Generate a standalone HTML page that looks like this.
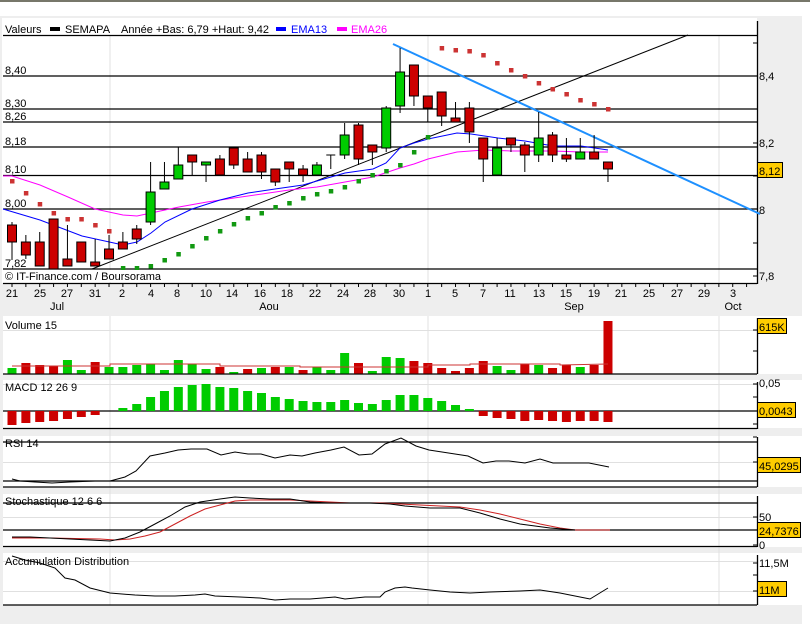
<!DOCTYPE html>
<html><head><meta charset="utf-8"><style>
html,body{margin:0;padding:0;background:#fff;width:810px;height:624px;overflow:hidden}
svg{display:block;font-family:"Liberation Sans",sans-serif;font-size:11px}
</style></head><body>
<svg id="s" width="810" height="624" viewBox="0 0 810 624" xmlns="http://www.w3.org/2000/svg">
<rect x="0" y="0" width="810" height="624" fill="#fff"/>
<rect x="0" y="0" width="810" height="2" fill="#77776a"/>
<rect x="0" y="16" width="802" height="608" fill="#eeeeee"/>
<rect x="2" y="18" width="755" height="265" fill="#fff"/>
<rect x="3" y="316" width="799" height="58" fill="#fff"/>
<rect x="3" y="380" width="799" height="48" fill="#fff"/>
<rect x="3" y="436" width="799" height="51" fill="#fff"/>
<rect x="3" y="494" width="799" height="53" fill="#fff"/>
<rect x="3" y="553" width="799" height="52" fill="#fff"/>
<g stroke="#e0e0e0" stroke-width="1">
<line x1="110" y1="36" x2="110" y2="283"/><line x1="428" y1="36" x2="428" y2="283"/><line x1="719" y1="36" x2="719" y2="283"/>
<line x1="110" y1="316" x2="110" y2="605"/><line x1="428" y1="316" x2="428" y2="605"/><line x1="719" y1="316" x2="719" y2="605"/>
<line x1="3" y1="330.5" x2="757" y2="330.5"/><line x1="3" y1="384.5" x2="757" y2="384.5"/><line x1="3" y1="462.5" x2="757" y2="462.5"/>
<line x1="3" y1="517.5" x2="757" y2="517.5"/><line x1="3" y1="561.5" x2="757" y2="561.5"/><line x1="3" y1="591.5" x2="757" y2="591.5"/>
</g>
<g stroke="#000" stroke-width="1.3">
<line x1="3" y1="35.5" x2="757" y2="35.5"/>
<line x1="3" y1="76" x2="757" y2="76"/><line x1="3" y1="109" x2="757" y2="109"/><line x1="3" y1="122" x2="757" y2="122"/>
<line x1="3" y1="147" x2="757" y2="147"/><line x1="3" y1="175.5" x2="757" y2="175.5"/><line x1="3" y1="209" x2="757" y2="209"/>
<line x1="3" y1="269" x2="757" y2="269"/>
<line x1="3" y1="283.5" x2="757" y2="283.5"/><line x1="757.5" y1="21" x2="757.5" y2="284"/>
<line x1="3" y1="374" x2="757" y2="374"/><line x1="757.5" y1="318" x2="757.5" y2="374"/>
<line x1="3" y1="411" x2="757" y2="411"/><line x1="3" y1="428.5" x2="757" y2="428.5"/><line x1="757.5" y1="382" x2="757.5" y2="429"/>
<line x1="3" y1="442" x2="757" y2="442"/><line x1="3" y1="481" x2="757" y2="481"/><line x1="3" y1="487" x2="757" y2="487"/><line x1="757.5" y1="437" x2="757.5" y2="487"/>
<line x1="3" y1="503" x2="757" y2="503"/><line x1="3" y1="530" x2="757" y2="530"/><line x1="3" y1="546.5" x2="757" y2="546.5"/><line x1="757.5" y1="496" x2="757.5" y2="547"/>
<line x1="3" y1="605" x2="757" y2="605"/><line x1="757.5" y1="555" x2="757.5" y2="605"/>
</g>
<g stroke="#000" stroke-width="1">
<line x1="753" y1="43" x2="757" y2="43"/><line x1="753" y1="76" x2="757" y2="76"/><line x1="753" y1="109" x2="757" y2="109"/><line x1="753" y1="143" x2="757" y2="143"/><line x1="753" y1="176" x2="757" y2="176"/><line x1="753" y1="209" x2="757" y2="209"/><line x1="753" y1="243" x2="757" y2="243"/><line x1="753" y1="276" x2="757" y2="276"/>
<line x1="753" y1="330" x2="757" y2="330"/><line x1="753" y1="351" x2="757" y2="351"/>
<line x1="753" y1="384" x2="757" y2="384"/><line x1="753" y1="397" x2="757" y2="397"/><line x1="753" y1="424" x2="757" y2="424"/>
<line x1="753" y1="437" x2="757" y2="437"/><line x1="753" y1="462" x2="757" y2="462"/>
<line x1="753" y1="517" x2="757" y2="517"/><line x1="753" y1="545" x2="757" y2="545"/>
<line x1="753" y1="563" x2="757" y2="563"/><line x1="753" y1="575" x2="757" y2="575"/><line x1="753" y1="591" x2="757" y2="591"/>
</g>
<g id="dyn"></g>
<rect x="4" y="270" width="136" height="12" fill="#fff"/>
<text x="5" y="280">© IT-Finance.com / Boursorama</text>
<text x="5" y="33">Valeurs</text>
<rect x="50" y="27" width="10" height="4" fill="#000"/>
<text x="65" y="33">SEMAPA</text>
<text x="121" y="33">Année +Bas: 6,79 +Haut: 9,42</text>
<rect x="276" y="27" width="10" height="4" fill="#0000ff"/>
<text x="291" y="33" fill="#0000ff">EMA13</text>
<rect x="337" y="27" width="10" height="4" fill="#ff00ff"/>
<text x="351" y="33" fill="#ff00ff">EMA26</text>
<text x="5" y="74">8,40</text><text x="5" y="107">8,30</text><text x="5" y="120">8,26</text>
<text x="5" y="145">8,18</text><text x="5" y="173">8,10</text><text x="5" y="207">8,00</text><text x="5" y="267">7,82</text>
<text x="759" y="80">8,4</text><text x="759" y="147">8,2</text><text x="759" y="214">8</text><text x="759" y="280">7,8</text>
<rect x="757.5" y="162.5" width="25" height="15" fill="#ffcc00" stroke="#000"/><text x="759" y="175">8,12</text>
<g text-anchor="middle">
<text x="12" y="297">21</text><text x="40" y="297">25</text><text x="67" y="297">27</text><text x="95" y="297">31</text><text x="122" y="297">2</text><text x="151" y="297">4</text><text x="177" y="297">8</text><text x="206" y="297">10</text><text x="232" y="297">14</text><text x="260" y="297">16</text><text x="287" y="297">18</text><text x="315" y="297">22</text><text x="343" y="297">24</text><text x="370" y="297">28</text><text x="399" y="297">30</text><text x="428" y="297">1</text><text x="455" y="297">5</text><text x="483" y="297">7</text><text x="510" y="297">11</text><text x="539" y="297">13</text><text x="566" y="297">15</text><text x="594" y="297">19</text><text x="621" y="297">21</text><text x="649" y="297">25</text><text x="677" y="297">27</text><text x="704" y="297">29</text><text x="733" y="297">3</text>
<text x="57" y="310">Jul</text><text x="269" y="310">Aou</text><text x="574" y="310">Sep</text><text x="733" y="310">Oct</text>
</g>
<text x="5" y="329">Volume 15</text>
<text x="5" y="391">MACD 12 26 9</text>
<text x="5" y="447">RSI 14</text>
<text x="5" y="505">Stochastique 12 6 6</text>
<text x="5" y="565">Accumulation Distribution</text>
<rect x="757.5" y="318.5" width="29" height="15" fill="#ffcc00" stroke="#000"/><text x="759" y="331">615K</text>
<text x="759" y="387">0,05</text>
<rect x="757.5" y="402.5" width="38" height="15" fill="#ffcc00" stroke="#000"/><text x="759" y="415">0,0043</text>
<rect x="757.5" y="457.5" width="43" height="15" fill="#ffcc00" stroke="#000"/><text x="759" y="470">45,0295</text>
<text x="759" y="521">50</text>
<rect x="757.5" y="522.5" width="43" height="15" fill="#ffcc00" stroke="#000"/><text x="759" y="535">24,7376</text>
<text x="759" y="549">0</text>
<text x="759" y="567">11,5M</text>
<rect x="757.5" y="581.5" width="29" height="15" fill="#ffcc00" stroke="#000"/><text x="759" y="594">11M</text>
</svg>
<script>
(function(){
var g=document.getElementById('dyn'),h='';
function X(i){return 12+13.86*i;}
var C=[[225,242,222,260,'r'],[242,255,235,259,'r'],[242,266,232,266,'r'],[219,269,219,269,'r'],[259,266,225,266,'r'],[242,262,242,262,'r'],[262,266,239,266,'r'],[249,259,235,259,'r'],[242,249,232,249,'r'],[229,239,225,244,'r'],
[192,222,162,225,'g'],[182,189,162,189,'g'],[165,179,147,179,'g'],[155,162,155,175,'r'],[162,165,162,182,'g'],[159,175,155,175,'r'],[148,165,148,169,'r'],[159,172,152,172,'r'],[155,172,152,179,'r'],[169,182,169,186,'r'],
[162,169,162,182,'r'],[169,175,165,182,'r'],[165,175,162,175,'g'],[155,155,155,169,'d'],[135,155,123,159,'g'],[125,159,123,165,'r'],[145,152,145,165,'r'],[108,148,106,152,'g'],[72,106,48,113,'g'],[65,96,65,106,'r'],
[96,108,96,122,'r'],[92,116,92,126,'r'],[118,122,102,122,'r'],[108,132,102,143,'r'],[138,159,138,182,'r'],[148,175,138,175,'g'],[138,145,138,152,'r'],[145,155,142,172,'r'],[138,155,112,162,'g'],[135,155,132,162,'r'],
[155,159,138,162,'r'],[152,159,138,159,'g'],[152,159,135,159,'r'],[162,169,162,182,'r']];
h+='<line x1="92" y1="269" x2="688" y2="35" stroke="#000" stroke-width="1"/>';
h+='<line x1="393" y1="44" x2="760" y2="214" stroke="#1e90ff" stroke-width="2"/>';
function pl(pts,col,w){return '<polyline fill="none" stroke="'+col+'" stroke-width="'+(w||1)+'" points="'+pts+'"/>';}
h+=pl('3,176 12,176 40,185 68,197 95,209 123,215 137,216 151,213 179,207 207,202 234,198 262,194 289,190 317,187 345,182 373,177 400,168 414,164 428,159 457,152 484,150 511,151 553,151 581,152 608,152','#ff00ff');
h+=pl('3,209 40,220 82,236 123,245 137,242 151,233 165,222 192,209 220,200 248,193 275,189 303,185 317,181 345,173 373,169 386,163 400,148 414,143 428,139 457,133 471,134 498,138 525,141 553,146 581,146 608,150','#0000ff');
for(var i=0;i<C.length;i++){var c=C[i],x=X(i);
 h+='<line x1="'+x+'" y1="'+c[2]+'" x2="'+x+'" y2="'+c[3]+'" stroke="#000"/>';
 if(c[4]=='d'){h+='<line x1="'+(x-4.5)+'" y1="'+c[0]+'" x2="'+(x+4.5)+'" y2="'+c[0]+'" stroke="#000"/>';}
 else h+='<rect x="'+(x-4.5)+'" y="'+c[0]+'" width="9" height="'+Math.max(1,c[1]-c[0])+'" fill="'+(c[4]=='r'?'#cc0000':'#00cc00')+'" stroke="#000"/>';}
var SR=[181,193,204,213,219,219,225,231],SG=[268,268,266,260,254,246,238,231,224,218,213,207,203,198,194,191,187,181,175,171,165,152,137],SR2=[48,50,51,55,63,70,76,83,89,94,100,104,109];
for(i=0;i<SR.length;i++)h+='<rect x="'+(X(i)-2)+'" y="'+(SR[i]-2)+'" width="4.5" height="4.5" fill="#cc3333"/>';
for(i=0;i<SG.length;i++)h+='<rect x="'+(X(i+8)-2)+'" y="'+(SG[i]-2)+'" width="4.5" height="4.5" fill="#119911"/>';
for(i=0;i<SR2.length;i++)h+='<rect x="'+(X(i+31)-2)+'" y="'+(SR2[i]-2)+'" width="4.5" height="4.5" fill="#cc3333"/>';
var V=[368,363,365,366,360,370,362,367,367,365,364,370,360,364,369,367,372,369,368,367,367,370,367,370,353,363,371,357,358,361,363,368,371,368,361,366,370,364,365,368,365,367,365,321];
var VC='grrrggrggggggggrgrgrgrgggrgggrrrrrrggrgrrgrr';
for(i=0;i<V.length;i++)h+='<rect x="'+(X(i)-4.5)+'" y="'+V[i]+'" width="9" height="'+(373.5-V[i])+'" fill="'+(VC[i]=='r'?'#cc0000':'#00cc00')+'"/>';
h+=pl('12,366 110,366 110,364 165,364 220,364 220,366 300,366 300,367 428,367 428,365 470,365 470,364 560,364 560,365 608,364','#cc3333');
var M=[425,423,422,421,419,417,415,null,408,404,397,391,387,385,384,387,388,391,393,397,399,401,402,402,400,403,404,400,395,395,398,401,405,409,416,418,419,421,420,421,422,421,421,422];
for(i=0;i<M.length;i++){if(M[i]==null)continue;var t=Math.min(M[i],411),b=Math.max(M[i],411);
 h+='<rect x="'+(X(i)-4.5)+'" y="'+t+'" width="9" height="'+(b-t)+'" fill="'+(M[i]>411?'#cc0000':'#00cc00')+'"/>';}
h+=pl('12,479 20,481 35,482 52,483 70,482 95,481 110,481 125,477 136,471 150,456 165,453 178,450 191,449 207,449 221,455 235,452 248,454 261,454 275,458 290,455 302,456 315,453 331,450 344,447 359,455 372,454 385,444 401,438 416,446 429,450 442,452 455,454 468,456 483,463 496,461 509,461 525,463 540,459 553,463 574,463 589,463 609,467','#000');
h+=pl('12,538 50,538 100,539 115,540 130,539 145,536 160,532 175,524 190,516 205,509 220,505 235,501 250,500 270,500 290,500 310,501 330,502 350,503 380,503 400,504 420,505 440,506 460,507 480,510 500,514 520,519 540,524 560,528 575,530 610,530','#cc2222');
h+=pl('12,537 30,537 50,538 70,539 90,540 110,541 125,538 140,532 155,524 170,516 185,507 200,502 220,499 235,497 250,498 270,499 290,499 310,502 330,503 350,503 370,503 390,504 405,506 430,508 460,508 480,513 500,519 520,524 550,528 575,530','#000');
h+=pl('12,556 25,560 40,563 55,568 65,578 75,580 90,588 110,593 135,595 155,596 175,596 195,595 205,594 215,596 240,597 260,598 275,600 290,599 310,599 335,597 345,599 365,597 380,597 385,592 395,588 405,587 412,588 430,590 450,592 470,593 490,592 520,591 540,590 560,593 570,595 590,599 608,588','#000');
for(i=0;i<54;i++){var xx=X(i);if(xx>755)break;h+='<line x1="'+xx+'" y1="283" x2="'+xx+'" y2="287" stroke="#000"/>';}
g.innerHTML=h;
})();
</script>
</body></html>
